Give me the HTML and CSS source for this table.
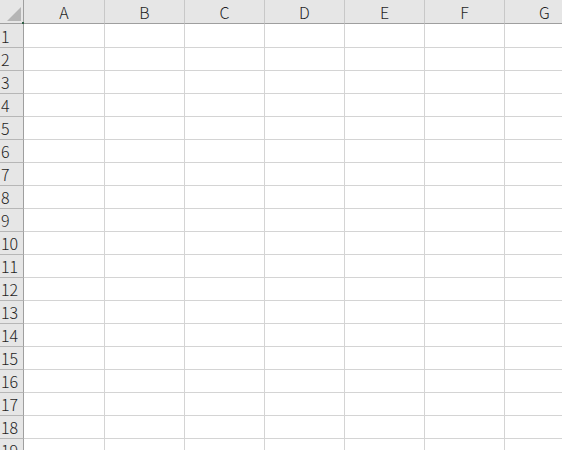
FILE: index.html
```html
<!DOCTYPE html>
<html lang="zh-CN">
<head>
<meta charset="utf-8">
<title>Sheet1</title>
<link rel="stylesheet" href="styles.css">
</head>
<body>
<div class="sheet">
  <div class="corner"><svg class="tri" width="14" height="14" viewBox="0 0 14 14"><polygon points="14,0 14,14 0,14" fill="#b5b5b5"/></svg><span class="sel-dot"></span></div>
  <div class="ch">A</div><div class="ch">B</div><div class="ch">C</div><div class="ch">D</div><div class="ch">E</div><div class="ch">F</div><div class="ch">G</div>

  <div class="rh">1</div><div class="c"></div><div class="c"></div><div class="c"></div><div class="c"></div><div class="c"></div><div class="c"></div><div class="c"></div>
  <div class="rh">2</div><div class="c"></div><div class="c"></div><div class="c"></div><div class="c"></div><div class="c"></div><div class="c"></div><div class="c"></div>
  <div class="rh">3</div><div class="c"></div><div class="c"></div><div class="c"></div><div class="c"></div><div class="c"></div><div class="c"></div><div class="c"></div>
  <div class="rh">4</div><div class="c"></div><div class="c"></div><div class="c"></div><div class="c"></div><div class="c"></div><div class="c"></div><div class="c"></div>
  <div class="rh">5</div><div class="c"></div><div class="c"></div><div class="c"></div><div class="c"></div><div class="c"></div><div class="c"></div><div class="c"></div>
  <div class="rh">6</div><div class="c"></div><div class="c"></div><div class="c"></div><div class="c"></div><div class="c"></div><div class="c"></div><div class="c"></div>
  <div class="rh">7</div><div class="c"></div><div class="c"></div><div class="c"></div><div class="c"></div><div class="c"></div><div class="c"></div><div class="c"></div>
  <div class="rh">8</div><div class="c"></div><div class="c"></div><div class="c"></div><div class="c"></div><div class="c"></div><div class="c"></div><div class="c"></div>
  <div class="rh">9</div><div class="c"></div><div class="c"></div><div class="c"></div><div class="c"></div><div class="c"></div><div class="c"></div><div class="c"></div>
  <div class="rh">10</div><div class="c"></div><div class="c"></div><div class="c"></div><div class="c"></div><div class="c"></div><div class="c"></div><div class="c"></div>
  <div class="rh">11</div><div class="c"></div><div class="c"></div><div class="c"></div><div class="c"></div><div class="c"></div><div class="c"></div><div class="c"></div>
  <div class="rh">12</div><div class="c"></div><div class="c"></div><div class="c"></div><div class="c"></div><div class="c"></div><div class="c"></div><div class="c"></div>
  <div class="rh">13</div><div class="c"></div><div class="c"></div><div class="c"></div><div class="c"></div><div class="c"></div><div class="c"></div><div class="c"></div>
  <div class="rh">14</div><div class="c"></div><div class="c"></div><div class="c"></div><div class="c"></div><div class="c"></div><div class="c"></div><div class="c"></div>
  <div class="rh">15</div><div class="c"></div><div class="c"></div><div class="c"></div><div class="c"></div><div class="c"></div><div class="c"></div><div class="c"></div>
  <div class="rh">16</div><div class="c"></div><div class="c"></div><div class="c"></div><div class="c"></div><div class="c"></div><div class="c"></div><div class="c"></div>
  <div class="rh">17</div><div class="c"></div><div class="c"></div><div class="c"></div><div class="c"></div><div class="c"></div><div class="c"></div><div class="c"></div>
  <div class="rh">18</div><div class="c"></div><div class="c"></div><div class="c"></div><div class="c"></div><div class="c"></div><div class="c"></div><div class="c"></div>
  <div class="rh">19</div><div class="c"></div><div class="c"></div><div class="c"></div><div class="c"></div><div class="c"></div><div class="c"></div><div class="c"></div>
</div>
</body>
</html>
```

FILE: styles.css
```css
html, body {
  margin: 0;
  padding: 0;
  background: #ffffff;
  overflow: hidden;
}

.sheet {
  display: grid;
  grid-template-columns: 24px 81px repeat(6, 80px);
  grid-template-rows: 24px 24px;
  grid-auto-rows: 23px;
  width: max-content;
  font-family: "Noto Sans CJK SC", "Liberation Sans", sans-serif;
  font-size: 16px;
  font-weight: 300;
  color: #1f1f1f;
}

.sheet > div {
  box-sizing: border-box;
  border-right: 1px solid #d4d4d4;
  border-bottom: 1px solid #d4d4d4;
}

.corner {
  position: relative;
  background: #e6e6e6;
  display: flex;
  align-items: flex-end;
  justify-content: flex-end;
  padding: 0 2px 2px 0;
}

.sheet > .corner {
  border-right: 1px solid #9f9f9f;
  border-bottom: 1px solid #9f9f9f;
}

.tri {
  display: block;
}

.sel-dot {
  position: absolute;
  right: -1px;
  bottom: -1px;
  width: 2px;
  height: 2px;
  background: #2f5f45;
}

.sheet > .ch {
  background: #e6e6e6;
  border-right: 1px solid #c8c8c8;
  border-bottom: 1px solid #9f9f9f;
  display: flex;
  align-items: center;
  justify-content: center;
  line-height: 1;
}

.sheet > .rh {
  background: #e6e6e6;
  border-right: 1px solid #9f9f9f;
  border-bottom: 1px solid #b6b6b6;
  display: flex;
  align-items: center;
  padding-left: 1px;
  line-height: 1;
}

.c {
  background: #ffffff;
}
```
